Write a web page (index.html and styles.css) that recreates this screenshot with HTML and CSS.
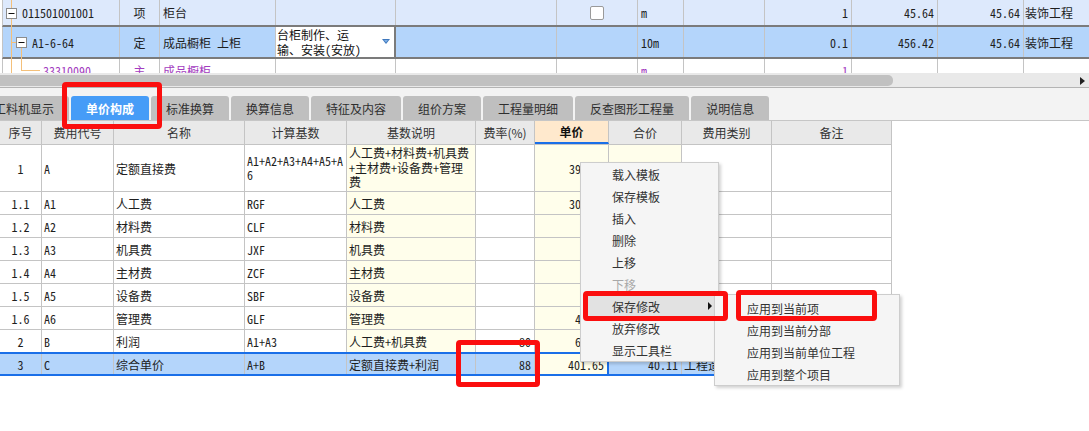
FILE: index.html
```html
<!DOCTYPE html>
<html lang="zh-CN">
<head>
<meta charset="utf-8">
<title>单价构成</title>
<link rel="stylesheet" href="styles.css">
</head>
<body>
<div class="app">
  <div class="top">
    <div class="trow r1">
      <div class="tc t1 lvl1">011501001001</div>
      <div class="tc t2 ctr">项</div>
      <div class="tc t3">柜台</div>
      <div class="tc t4"></div>
      <div class="tc t5"></div>
      <div class="tc t6 ctr"><span class="chk"></span></div>
      <div class="tc t7">m</div>
      <div class="tc t8"></div>
      <div class="tc t9 num">1</div>
      <div class="tc t10 num">45.64</div>
      <div class="tc t11 num">45.64</div>
      <div class="tc t12">装饰工程</div>
    </div>
    <div class="trow r2">
      <div class="tc t1 lvl2">A1-6-64</div>
      <div class="tc t2 ctr">定</div>
      <div class="tc t3">成品橱柜 上柜</div>
      <div class="tc t4 editor"><span class="edtext">台柜制作、运<br>输、安装(安放)</span><svg class="drop" width="8" height="5" viewBox="0 0 8 5"><polygon points="0,0 8,0 4,5" fill="#3f78bd"/><polygon points="2,1 6,1 4,3.4" fill="#7fb0e6"/></svg></div>
      <div class="tc t5"></div>
      <div class="tc t6"></div>
      <div class="tc t7">10m</div>
      <div class="tc t8"></div>
      <div class="tc t9 num">0.1</div>
      <div class="tc t10 num">456.42</div>
      <div class="tc t11 num">45.64</div>
      <div class="tc t12">装饰工程</div>
    </div>
    <div class="trow r3">
      <div class="tc t1 lvl3">33310090</div>
      <div class="tc t2 ctr">主</div>
      <div class="tc t3">成品橱柜</div>
      <div class="tc t4"></div>
      <div class="tc t5"></div>
      <div class="tc t6"></div>
      <div class="tc t7">m</div>
      <div class="tc t8"></div>
      <div class="tc t9 num">1</div>
      <div class="tc t10"></div>
      <div class="tc t11"></div>
      <div class="tc t12"></div>
    </div>
    <svg class="treelines" width="50" height="73" viewBox="0 0 50 73">
      <g stroke="#f4c07a" stroke-width="1" fill="none">
        <line x1="11.5" y1="0" x2="11.5" y2="73"/>
        <line x1="11" y1="42.5" x2="16" y2="42.5"/>
        <line x1="21.5" y1="47" x2="21.5" y2="70.5"/>
        <line x1="21" y1="70.5" x2="40" y2="70.5"/>
      </g>
      <rect x="6.5" y="8.5" width="10" height="10" fill="#fff" stroke="#8c8c8c"/>
      <line x1="8.5" y1="13.5" x2="14.5" y2="13.5" stroke="#111"/>
      <rect x="16.5" y="37.5" width="10" height="10" fill="#fff" stroke="#8c8c8c"/>
      <line x1="18.5" y1="42.5" x2="24.5" y2="42.5" stroke="#111"/>
    </svg>
  </div>

  <div class="hscroll">
    <div class="thumb"></div>
    <div class="sarrow"></div>
  </div>
  <div class="splitline"></div>

  <div class="tabbar">
    <div class="tab first">工料机显示</div>
    <div class="tab active">单价构成</div>
    <div class="tab">标准换算</div>
    <div class="tab">换算信息</div>
    <div class="tab">特征及内容</div>
    <div class="tab">组价方案</div>
    <div class="tab">工程量明细</div>
    <div class="tab">反查图形工程量</div>
    <div class="tab">说明信息</div>
  </div>

  <div class="grid">
    <div class="row head">
      <div class="c c1 ctr">序号</div>
      <div class="c c2 ctr">费用代号</div>
      <div class="c c3 ctr">名称</div>
      <div class="c c4 ctr">计算基数</div>
      <div class="c c5 ctr">基数说明</div>
      <div class="c c6 ctr">费率(%)</div>
      <div class="c c7 ctr hot">单价</div>
      <div class="c c8 ctr">合价</div>
      <div class="c c9 ctr">费用类别</div>
      <div class="c c10 ctr">备注</div>
    </div>
    <div class="row tall">
      <div class="c c1 ctr">1</div>
      <div class="c c2">A</div>
      <div class="c c3">定额直接费</div>
      <div class="c c4 wrap">A1+A2+A3+A4+A5+A6</div>
      <div class="c c5 cream wrap">人工费+材料费+机具费+主材费+设备费+管理费</div>
      <div class="c c6"></div>
      <div class="c c7 cream num">392.64</div>
      <div class="c c8 cream"></div>
      <div class="c c9"></div>
      <div class="c c10"></div>
    </div>
    <div class="row">
      <div class="c c1 ctr">1.1</div>
      <div class="c c2">A1</div>
      <div class="c c3">人工费</div>
      <div class="c c4">RGF</div>
      <div class="c c5 cream">人工费</div>
      <div class="c c6"></div>
      <div class="c c7 cream num">304.08</div>
      <div class="c c8 cream"></div>
      <div class="c c9"></div>
      <div class="c c10"></div>
    </div>
    <div class="row">
      <div class="c c1 ctr">1.2</div>
      <div class="c c2">A2</div>
      <div class="c c3">材料费</div>
      <div class="c c4">CLF</div>
      <div class="c c5 cream">材料费</div>
      <div class="c c6"></div>
      <div class="c c7 cream num"></div>
      <div class="c c8 cream"></div>
      <div class="c c9"></div>
      <div class="c c10"></div>
    </div>
    <div class="row">
      <div class="c c1 ctr">1.3</div>
      <div class="c c2">A3</div>
      <div class="c c3">机具费</div>
      <div class="c c4">JXF</div>
      <div class="c c5 cream">机具费</div>
      <div class="c c6"></div>
      <div class="c c7 cream num"></div>
      <div class="c c8 cream"></div>
      <div class="c c9"></div>
      <div class="c c10"></div>
    </div>
    <div class="row">
      <div class="c c1 ctr">1.4</div>
      <div class="c c2">A4</div>
      <div class="c c3">主材费</div>
      <div class="c c4">ZCF</div>
      <div class="c c5 cream">主材费</div>
      <div class="c c6"></div>
      <div class="c c7 cream num"></div>
      <div class="c c8 cream"></div>
      <div class="c c9"></div>
      <div class="c c10"></div>
    </div>
    <div class="row">
      <div class="c c1 ctr">1.5</div>
      <div class="c c2">A5</div>
      <div class="c c3">设备费</div>
      <div class="c c4">SBF</div>
      <div class="c c5 cream">设备费</div>
      <div class="c c6"></div>
      <div class="c c7 cream num"></div>
      <div class="c c8 cream"></div>
      <div class="c c9"></div>
      <div class="c c10"></div>
    </div>
    <div class="row">
      <div class="c c1 ctr">1.6</div>
      <div class="c c2">A6</div>
      <div class="c c3">管理费</div>
      <div class="c c4">GLF</div>
      <div class="c c5 cream">管理费</div>
      <div class="c c6"></div>
      <div class="c c7 cream num">43.84</div>
      <div class="c c8 cream"></div>
      <div class="c c9"></div>
      <div class="c c10"></div>
    </div>
    <div class="row">
      <div class="c c1 ctr">2</div>
      <div class="c c2">B</div>
      <div class="c c3">利润</div>
      <div class="c c4">A1+A3</div>
      <div class="c c5 cream">人工费+机具费</div>
      <div class="c c6 num">80</div>
      <div class="c c7 cream num">61.47</div>
      <div class="c c8 cream"></div>
      <div class="c c9"></div>
      <div class="c c10"></div>
    </div>
    <div class="row sel">
      <div class="c c1 ctr">3</div>
      <div class="c c2">C</div>
      <div class="c c3">综合单价</div>
      <div class="c c4">A+B</div>
      <div class="c c5">定额直接费+利润</div>
      <div class="c c6 num">88</div>
      <div class="c c7 cream num">401.65</div>
      <div class="c c8 num">40.11</div>
      <div class="c c9">工程造价</div>
      <div class="c c10"></div>
    </div>
  </div>

  <div class="ctx">
    <div class="mi">载入模板</div>
    <div class="mi">保存模板</div>
    <div class="mi">插入</div>
    <div class="mi">删除</div>
    <div class="mi">上移</div>
    <div class="mi dis">下移</div>
    <div class="mi hover">保存修改<span class="sub-arrow"></span></div>
    <div class="mi">放弃修改</div>
    <div class="mi">显示工具栏</div>
  </div>
  <div class="submenu">
    <div class="mi">应用到当前项</div>
    <div class="mi">应用到当前分部</div>
    <div class="mi">应用到当前单位工程</div>
    <div class="mi">应用到整个项目</div>
  </div>

  <div class="mark mark-tab"></div>
  <div class="mark mark-rate"></div>
  <div class="mark mark-save"></div>
  <div class="mark mark-apply"></div>
</div>
</body>
</html>
```

FILE: styles.css
```css
* { box-sizing: border-box; }

html, body {
  margin: 0;
  padding: 0;
  background: #ffffff;
}

body {
  width: 1089px;
  height: 431px;
  overflow: hidden;
  font-family: "Noto Sans Mono CJK SC", "Noto Sans CJK SC", "DejaVu Sans", sans-serif;
  font-size: 12px;
  color: #1e1e1e;
}

.app {
  position: relative;
  width: 1089px;
  height: 431px;
  overflow: hidden;
}

/* ---------- top grid ---------- */
.top {
  position: relative;
  height: 73px;
  overflow: hidden;
  background: #fff;
}

.trow {
  display: flex;
  margin-left: 2px;
  border-left: 1px solid #c4c4c4;
}

.r1 {
  height: 27px;
  background: #dde9fc;
  border-bottom: 2px solid #7b7b7b;
}

.r2 {
  height: 32px;
  background: #b4d5fb;
  border-bottom: 2px solid #7b7b7b;
}

.r3 {
  height: 22px;
  background: #fff;
  color: #a33cc0;
}

.tc {
  flex: none;
  display: flex;
  align-items: center;
  padding: 0 3px;
  border-right: 1px solid #c4c4c4;
  white-space: nowrap;
  overflow: hidden;
}

.t1 { width: 117px; }
.t2 { width: 40px; }
.t3 { width: 116px; }
.t4 { width: 120px; }
.t5 { width: 161px; }
.t6 { width: 81px; }
.t7 { width: 46px; }
.t8 { width: 81px; }
.t9 { width: 87px; }
.t10 { width: 86px; }
.t11 { width: 86px; }
.t12 { width: 70px; border-right: none; padding-left: 1px; }

.lvl1 { padding-left: 19px; }
.lvl2 { padding-left: 29px; }
.lvl3 { padding-left: 40px; }

.ctr { justify-content: center; }
.num { justify-content: flex-end; }

.chk {
  width: 14px;
  height: 14px;
  background: #fff;
  border: 1px solid #9a9a9a;
  border-radius: 2px;
}

.editor {
  background: #fff;
  border-right: 2px solid #7b7b7b;
  padding: 0 4px 0 1px;
  align-items: center;
  justify-content: space-between;
}

.edtext {
  line-height: 15px;
  font-size: 12px;
  color: #111;
}

.drop {
  flex: none;
  margin-top: -2px;
}

.treelines {
  position: absolute;
  left: 0;
  top: 0;
  z-index: 2;
}

/* ---------- scroll & splitter ---------- */
.hscroll {
  position: relative;
  height: 14px;
  background: #e9e9e9;
  padding-top: 2px;
}

.thumb {
  width: 893px;
  height: 11px;
  background: #c1c1c1;
  border-radius: 0 5px 5px 0;
}

.sarrow {
  position: absolute;
  right: 4px;
  top: 4px;
  width: 0;
  height: 0;
  border-top: 4px solid transparent;
  border-bottom: 4px solid transparent;
  border-left: 5px solid #222;
}

.splitline {
  height: 1px;
  background: #b4b4b4;
}

/* ---------- tabs ---------- */
.tabbar {
  height: 33px;
  background: #f3f3f3;
  border-bottom: 1px solid #c6c6c6;
  display: flex;
  align-items: flex-end;
  gap: 2px;
  padding-top: 8px;
}

.tab {
  flex: none;
  height: 24px;
  padding: 0 15px;
  display: flex;
  align-items: center;
  background: #bfbfbf;
  color: #2e2e2e;
  border-radius: 3px 3px 0 0;
  font-family: "Noto Sans CJK SC", sans-serif;
  font-size: 12px;
  white-space: nowrap;
}

.tab.first { margin-left: -21px; }

.tab.active {
  background: #469cf7;
  color: #fff;
  font-weight: bold;
}

/* ---------- lower grid ---------- */
.grid {
  width: 892px;
}

.row {
  display: flex;
  height: 23px;
  border-bottom: 1px solid #c4c4c4;
}

.row.head {
  height: 24px;
  background: #e9e9e9;
  color: #333;
  font-family: "Noto Sans CJK SC", sans-serif;
}

.row.tall { height: 47px; }

.c {
  flex: none;
  display: flex;
  align-items: center;
  padding: 0 2px;
  border-right: 1px solid #c4c4c4;
  white-space: nowrap;
  overflow: hidden;
}

.c1 { width: 42px; }
.c2 { width: 72px; }
.c3 { width: 131px; }
.c4 { width: 102px; }
.c5 { width: 129px; }
.c6 { width: 59px; }
.c7 { width: 74px; }
.c8 { width: 73px; }
.c9 { width: 90px; }
.c10 { width: 120px; }

.c.num { justify-content: flex-end; padding-right: 3px; }

.wrap {
  white-space: normal;
  word-break: break-all;
  line-break: anywhere;
  line-height: 14.5px;
}

.cream { background: #fffeeb; }

.head .hot {
  background: #ffe9cd;
  font-weight: bold;
  color: #111;
  border-bottom: 2px solid #1a6fe8;
}

.row.sel {
  height: 24px;
  margin-top: -1px;
  background: #b4d5fb;
  border-top: 2px solid #1a6fe8;
  border-bottom: 2px solid #1a6fe8;
}

.row.sel .c7 {
  border-right: 2px solid #1a6fe8;
}

/* ---------- context menus ---------- */
.ctx,
.submenu {
  position: absolute;
  background: #f5f5f5;
  border: 1px solid #cdcdcd;
  box-shadow: 2px 2px 3px rgba(0, 0, 0, 0.18);
  font-family: "Noto Sans CJK SC", sans-serif;
  font-size: 12px;
  color: #333;
  z-index: 5;
}

.ctx {
  left: 580px;
  top: 162px;
  width: 139px;
}

.submenu {
  left: 714px;
  top: 294px;
  width: 186px;
  padding-top: 2px;
}

.mi {
  height: 22px;
  display: flex;
  align-items: center;
  padding-left: 31px;
  white-space: nowrap;
}

.submenu .mi { padding-left: 32px; }

.mi.dis { color: #a8a8a8; }

.mi.hover {
  background: #e2e2e2;
  margin: 0 2px;
  padding-left: 29px;
}

.sub-arrow {
  margin-left: auto;
  margin-right: 4px;
  width: 0;
  height: 0;
  border-top: 4px solid transparent;
  border-bottom: 4px solid transparent;
  border-left: 4px solid #111;
}

/* ---------- red annotation boxes ---------- */
.mark {
  position: absolute;
  border: 5px solid #fb0e0e;
  border-radius: 4px;
  z-index: 10;
}

.mark-tab { left: 62px; top: 82px; width: 100px; height: 47px; }
.mark-rate { left: 456px; top: 340px; width: 84px; height: 47px; }
.mark-save { left: 583px; top: 291px; width: 145px; height: 30px; }
.mark-apply { left: 736px; top: 290px; width: 141px; height: 31px; }
```
